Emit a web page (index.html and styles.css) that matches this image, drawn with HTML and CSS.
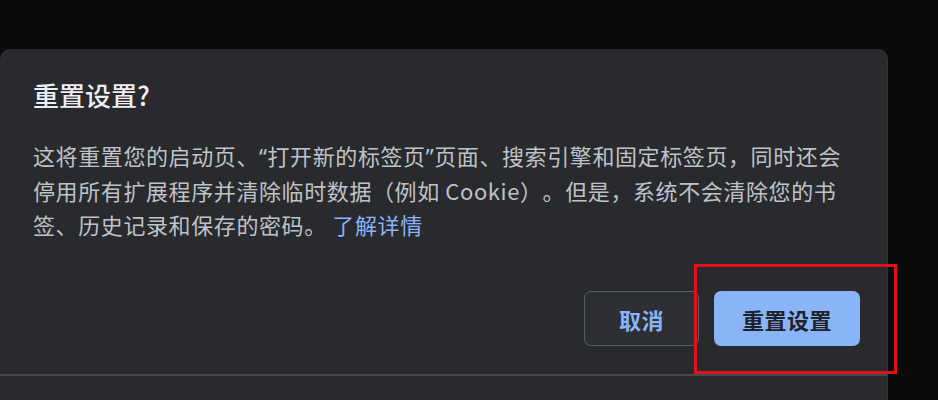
FILE: index.html
```html
<!DOCTYPE html>
<html lang="zh-CN">
<head>
  <meta charset="UTF-8">
  <title>重置设置</title>
  <link rel="stylesheet" href="styles.css">
</head>
<body>

<div class="dialog">
  <h2 class="dialog-title">重置设置?</h2>
  <p class="dialog-body">
    这将重置您的启动页、<span class="quote">“</span>打开新的标签页<span class="quote">”</span>页面、搜索引擎和固定标签页，同时还会<br>
    停用所有扩展程序并清除临时数据（例如 Cookie）。但是，系统不会清除您的书<br>
    签、历史记录和保存的密码。 <a href="#" class="link">了解详情</a>
  </p>
  <div class="dialog-buttons">
    <button class="btn btn-cancel">取消</button>
    <button class="btn btn-reset">重置设置</button>
  </div>
  <div class="dialog-footer"></div>

  <!-- highlight box -->
  <div class="highlight"></div>
</div>

</body>
</html>
```

FILE: styles.css
```css
body {
  margin: 0;
  background-color: #0b0b0c;
  font-family: "Noto Sans CJK SC", "Noto Sans", sans-serif;
  height: 400px;
  overflow: hidden;
}

.dialog {
  position: relative;
  margin-top: 49px;
  width: 887px;
  height: 400px;
  background: #292a2e;
  border-radius: 10px 10px 0 0;
  box-shadow: 1px 0 0 #323337;
  box-sizing: border-box;
  padding: 31px 27px 0 33px;
}

.dialog-title {
  margin: 0;
  font-size: 26px;
  line-height: 30px;
  font-weight: 500;
  color: #eceef1;
}

.dialog-body {
  margin: 28px 0 0;
  font-size: 22px;
  line-height: 34px;
  letter-spacing: 0.6px;
  color: #bfc2c7;
  white-space: nowrap;
  text-spacing-trim: space-all;
}

.quote {
  font-family: "Noto Sans", sans-serif;
}

.link {
  color: #8ab4f8;
  text-decoration: none;
}

.dialog-buttons {
  display: flex;
  justify-content: flex-end;
  gap: 15px;
  margin-top: 50px;
}

.btn {
  height: 55px;
  border-radius: 7px;
  font-family: inherit;
  font-size: 22px;
  letter-spacing: 0.5px;
  font-weight: 700;
  cursor: pointer;
}

.btn-cancel {
  width: 115px;
  background: #2d2f34;
  border: 1.5px solid #5a5d62;
  color: #8ab4f8;
}

.btn-reset {
  width: 146px;
  background: #8ab4f8;
  border: none;
  color: #1f2229;
}

.dialog-footer {
  margin: 28px -27px 0 -33px;
  border-top: 2px solid #46484c;
}

.highlight {
  position: absolute;
  left: 694px;
  top: 215px;
  width: 197px;
  height: 104px;
  border: 3px solid #e0111a;
}
```
